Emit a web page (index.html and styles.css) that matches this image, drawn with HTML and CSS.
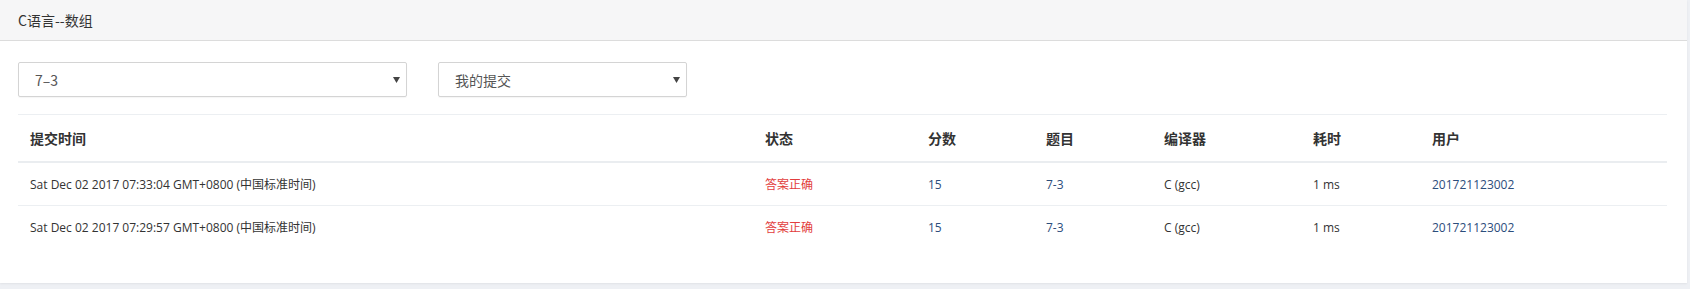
FILE: index.html
```html
<!DOCTYPE html>
<html lang="zh-CN">
<head>
<meta charset="utf-8">
<title>C语言--数组</title>
<link rel="stylesheet" href="styles.css">
</head>
<body>
<div class="panel">
  <div class="panel-heading">C语言--数组</div>
  <div class="panel-body">
    <div class="filters">
      <div class="select select-wide"><span>7–3</span><svg class="caret" width="7" height="6" viewBox="0 0 7 6"><path d="M0 0H7L3.5 6Z" fill="#444"/></svg></div>
      <div class="select select-narrow"><span>我的提交</span><svg class="caret" width="7" height="6" viewBox="0 0 7 6"><path d="M0 0H7L3.5 6Z" fill="#444"/></svg></div>
    </div>
    <table class="records">
      <colgroup>
        <col class="c1"><col class="c2"><col class="c3"><col class="c4"><col class="c5"><col class="c6"><col class="c7">
      </colgroup>
      <thead>
        <tr><th>提交时间</th><th>状态</th><th>分数</th><th>题目</th><th>编译器</th><th>耗时</th><th>用户</th></tr>
      </thead>
      <tbody>
        <tr>
          <td>Sat Dec 02 2017 07:33:04 GMT+0800 (中国标准时间)</td>
          <td class="ok">答案正确</td>
          <td class="link">15</td>
          <td class="link">7-3</td>
          <td>C (gcc)</td>
          <td>1 ms</td>
          <td class="link">201721123002</td>
        </tr>
        <tr>
          <td>Sat Dec 02 2017 07:29:57 GMT+0800 (中国标准时间)</td>
          <td class="ok">答案正确</td>
          <td class="link">15</td>
          <td class="link">7-3</td>
          <td>C (gcc)</td>
          <td>1 ms</td>
          <td class="link">201721123002</td>
        </tr>
      </tbody>
    </table>
  </div>
</div>
</body>
</html>
```
FILE: styles.css
```css
html, body {
  margin: 0;
  padding: 0;
}
body {
  background: #eef0f4;
  font-family: "Open Sans", "Noto Sans CJK SC", sans-serif;
  color: #333;
  width: 1690px;
  height: 289px;
  overflow: hidden;
}
.panel {
  width: 1687px;
  height: 283px;
  background: #fff;
  box-shadow: 0 1px 2px rgba(0,0,0,0.06);
  box-sizing: border-box;
}
.panel-heading {
  height: 41px;
  box-sizing: border-box;
  background: #f6f6f7;
  border-bottom: 1px solid #dcdcdc;
  padding-left: 18px;
  font-size: 14px;
  line-height: 40px;
  color: #333;
  font-family: "Noto Sans CJK SC", sans-serif;
}
.panel-body {
  padding: 21px 20px 0 18px;
}
.filters {
  display: flex;
  gap: 31px;
  margin-bottom: 17px;
}
.select {
  height: 35px;
  box-sizing: border-box;
  border: 1px solid #d4d4d4;
  border-radius: 2px;
  box-shadow: 0 1px 1px rgba(0,0,0,0.04);
  display: flex;
  align-items: center;
  justify-content: space-between;
  padding: 0 6px 0 16px;
  font-size: 14px;
  color: #555;
  font-family: "Noto Sans CJK SC", sans-serif;
}
.select-wide { width: 389px; }
.select-narrow { width: 249px; }
.caret { display: block; margin-top: 1px; }
.records {
  width: 1649px;
  border-collapse: collapse;
  table-layout: fixed;
  border-top: 1px solid #eceff2;
}
.c1 { width: 735px; }
.c2 { width: 163px; }
.c3 { width: 118px; }
.c4 { width: 118px; }
.c5 { width: 149px; }
.c6 { width: 119px; }
.c7 { width: 247px; }
.records th {
  text-align: left;
  font-weight: bold;
  font-size: 14px;
  height: 46px;
  padding: 0 0 0 12px;
  border-bottom: 2px solid #eaedf0;
  color: #333;
  font-family: "Noto Sans CJK SC", sans-serif;
}
.records td {
  font-size: 12px;
  height: 42px;
  padding: 0 0 0 12px;
  border-bottom: 1px solid #eceff2;
  color: #333;
  white-space: nowrap;
}
.records tbody tr:last-child td { border-bottom: none; }
.records td.ok { color: #e23d3d; }
.records td.link { color: #2c4d7c; }
```
